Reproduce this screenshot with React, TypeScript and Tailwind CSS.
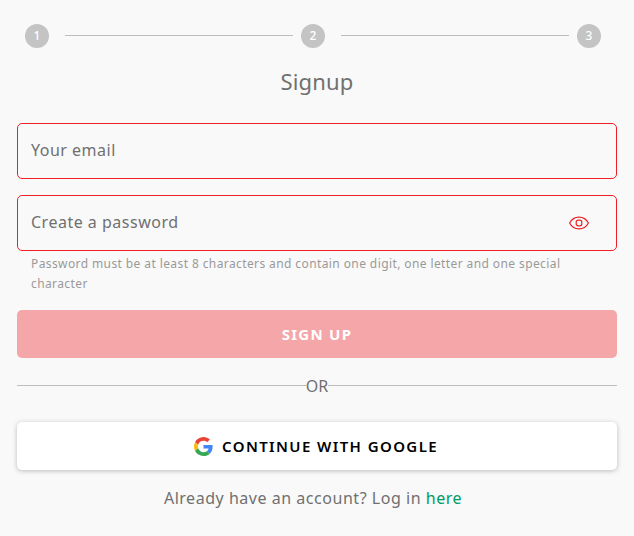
import React from "react";

function Step({ n }: { n: number }) {
  return (
    <div className="flex h-6 w-6 shrink-0 items-center justify-center rounded-full bg-[#c4c4c4] text-xs font-medium text-white">
      {n}
    </div>
  );
}

function EyeIcon() {
  return (
    <svg width="20" height="14" viewBox="0 0 20 14" fill="none" stroke="#ee2024" strokeWidth="1.2">
      <path d="M.6 7C2.600 3.200 6 1.100 10 1.100s7.400 2.100 9.400 5.900c-2 3.800-5.400 5.900-9.400 5.900S2.600 10.800.6 7Z" />
      <rect x="7.200" y="4.200" width="5.600" height="5.600" rx="2" />
    </svg>
  );
}

function GoogleIcon() {
  return (
    <svg width="19" height="19" viewBox="0 0 48 48">
      <path fill="#EA4335" d="M24 9.500c3.540 0 6.710 1.220 9.210 3.600l6.850-6.850C35.900 2.380 30.470 0 24 0 14.620 0 6.510 5.380 2.560 13.220l7.980 6.190C12.430 13.720 17.740 9.500 24 9.500z" />
      <path fill="#4285F4" d="M46.980 24.550c0-1.570-.15-3.090-.38-4.550H24v9.020h12.940c-.58 2.960-2.260 5.480-4.780 7.180l7.730 6c4.510-4.180 7.090-10.360 7.090-17.650z" />
      <path fill="#FBBC05" d="M10.530 28.590c-.48-1.450-.76-2.990-.76-4.590s.27-3.140.76-4.590l-7.980-6.190C.92 16.460 0 20.120 0 24s.92 7.540 2.560 10.780l7.970-6.190z" />
      <path fill="#34A853" d="M24 48c6.480 0 11.930-2.130 15.890-5.810l-7.730-6c-2.150 1.450-4.920 2.300-8.160 2.300-6.260 0-11.570-4.220-13.470-9.910l-7.980 6.190C6.510 42.620 14.620 48 24 48z" />
    </svg>
  );
}

export default function App() {
  return (
    <main className="flex h-[536px] w-[634px] flex-col bg-[#f9f9f9] px-[17px] pt-6 font-['Noto_Sans',sans-serif] text-[#707070]">
      <div className="flex items-center pr-4 pl-2">
        <Step n={1} />
        <div className="mr-2 mb-px ml-4 h-px flex-1 bg-[#bdbdbd]" />
        <Step n={2} />
        <div className="mr-2 mb-px ml-4 h-px flex-1 bg-[#bdbdbd]" />
        <Step n={3} />
      </div>
      <h1 className="mt-4 text-center text-[22px] leading-[34px] tracking-[0.2px]">Signup</h1>
      <div className="mt-[25px] flex h-14 shrink-0 items-center rounded-[5px] border border-[#ee2024] px-[13px] pb-0.5 text-base tracking-[0.5px]">
        Your email
      </div>
      <div className="mt-4 flex h-14 shrink-0 items-center justify-between rounded-[5px] border border-[#ee2024] pr-[27px] pl-[13px] text-base tracking-[0.5px]">
        <span className="pb-0.5">Create a password</span>
        <EyeIcon />
      </div>
      <p className="mt-[3px] px-3.5 text-xs leading-5 tracking-[0.4px] text-[#999]">
        Password must be at least 8 characters and contain one digit, one letter and one special character
      </p>
      <button className="mt-4 h-12 shrink-0 rounded-[5px] bg-[#f5a6a8] text-[15px] font-bold tracking-[1.25px] text-white">
        SIGN UP
      </button>
      <div className="mt-4 flex h-6 items-center">
        <div className="mb-px h-px flex-1 bg-[#bdbdbd]" />
        <span>OR</span>
        <div className="mb-px h-px flex-1 bg-[#bdbdbd]" />
      </div>
      <button className="mt-6 flex h-12 shrink-0 items-center justify-center gap-[9px] rounded-[5px] bg-white pr-0.5 text-[15px] font-semibold tracking-[1.4px] text-black shadow-[0_1px_5px_rgba(0,0,0,0.25)]">
        <GoogleIcon />
        <span>CONTINUE WITH GOOGLE</span>
      </button>
      <p className="mt-4 pr-2 text-center text-base leading-6 tracking-[0.53px]">
        Already have an account? Log in <a className="text-[#009b67]">here</a>
      </p>
    </main>
  );
}
